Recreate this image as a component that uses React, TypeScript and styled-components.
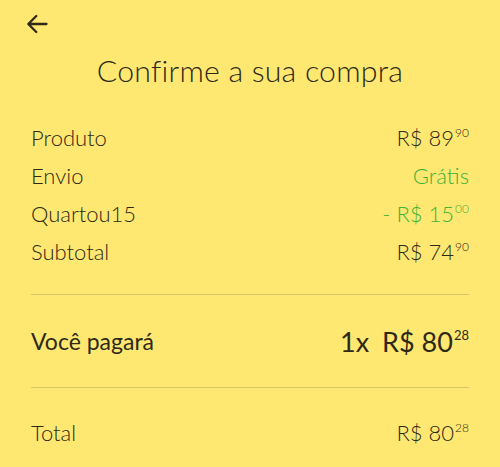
import React from "react";
import styled, { createGlobalStyle } from "styled-components";

const Color = {
  bg: "#fee872",
  text: "#2e2916",
  green: "#3db337",
  line: "#d6c665",
};

const GlobalStyle = createGlobalStyle`
  html, body {
    margin: 0;
    padding: 0;
    background: ${Color.bg};
  }
  body {
    font-family: Lato, "Open Sans", sans-serif;
    color: ${Color.text};
  }
`;

const Page = styled.div`
  width: 500px;
  height: 467px;
  background: ${Color.bg};
  overflow: hidden;
`;

const TopBar = styled.div`
  height: 46px;
  padding: 13px 0 0 25px;
  box-sizing: border-box;
`;

const BackButton = styled.button`
  border: none;
  background: none;
  padding: 0;
  width: 24px;
  height: 22px;
  display: flex;
  align-items: center;
  justify-content: center;
  color: ${Color.text};
`;

const Title = styled.h1`
  margin: 6px 0 0;
  text-align: center;
  font-size: 30.3px;
  font-weight: 300;
  letter-spacing: 0.2px;
  line-height: 36px;
`;

const Content = styled.div`
  padding: 0 31px;
  margin-top: 30px;
`;

const Group = styled.div`
  display: flex;
  flex-direction: column;
  padding: 0 0 24px;
`;

const Row = styled.div<{ tall?: boolean; last?: boolean }>`
  display: flex;
  justify-content: space-between;
  align-items: center;
  height: ${(p) => (p.tall ? "92px" : p.last ? "88px" : "38px")};
  font-size: 22px;
`;

const Label = styled.span<{ strong?: boolean }>`
  font-weight: ${(p) => (p.strong ? 400 : 300)};
  font-size: ${(p) => (p.strong ? "23px" : "22px")};
  color: ${Color.text};
`;

const Value = styled.span<{ green?: boolean; big?: boolean }>`
  color: ${(p) => (p.green ? Color.green : Color.text)};
  font-size: ${(p) => (p.big ? "27px" : "22px")};
  font-weight: ${(p) => (p.big ? 400 : 300)};
  display: inline-flex;
  align-items: flex-start;
  white-space: pre;
`;

const Cents = styled.sup<{ big?: boolean }>`
  font-size: ${(p) => (p.big ? "13px" : "12px")};
  line-height: 1;
  vertical-align: top;
  margin-left: 1px;
  margin-top: ${(p) => (p.big ? "4px" : "3px")};
`;

const Installments = styled.span`
  margin-right: 13px;
`;

const Divider = styled.hr`
  border: none;
  border-top: 1px solid ${Color.line};
  margin: 0;
`;

const Price: React.FC<{ value: string; cents: string; green?: boolean; big?: boolean; prefix?: string }> = ({
  value,
  cents,
  green,
  big,
  prefix,
}) => (
  <Value green={green} big={big}>
    {prefix}
    R$ {value}
    <Cents big={big}>{cents}</Cents>
  </Value>
);

export default function App() {
  return (
    <Page>
      <GlobalStyle />
      <TopBar>
        <BackButton aria-label="Voltar">
          <svg width="22" height="20" viewBox="0 0 22 20" fill="none">
            <path d="M20.5 10H2.5M10.3 2L2.3 10l8 8" stroke={Color.text} strokeWidth="2.3" strokeLinecap="round" strokeLinejoin="round" />
          </svg>
        </BackButton>
      </TopBar>
      <Title>Confirme a sua compra</Title>
      <Content>
        <Group>
          <Row>
            <Label>Produto</Label>
            <Price value="89" cents="90" />
          </Row>
          <Row>
            <Label>Envio</Label>
            <Value green>Grátis</Value>
          </Row>
          <Row>
            <Label>Quartou15</Label>
            <Price value="15" cents="00" green prefix="- " />
          </Row>
          <Row>
            <Label>Subtotal</Label>
            <Price value="74" cents="90" />
          </Row>
        </Group>
        <Divider />
        <Row tall>
          <Label strong>Você pagará</Label>
          <Value big>
            <Installments>1x</Installments>
            R$ 80
            <Cents big>28</Cents>
          </Value>
        </Row>
        <Divider />
        <Row last>
          <Label>Total</Label>
          <Price value="80" cents="28" />
        </Row>
      </Content>
    </Page>
  );
}
